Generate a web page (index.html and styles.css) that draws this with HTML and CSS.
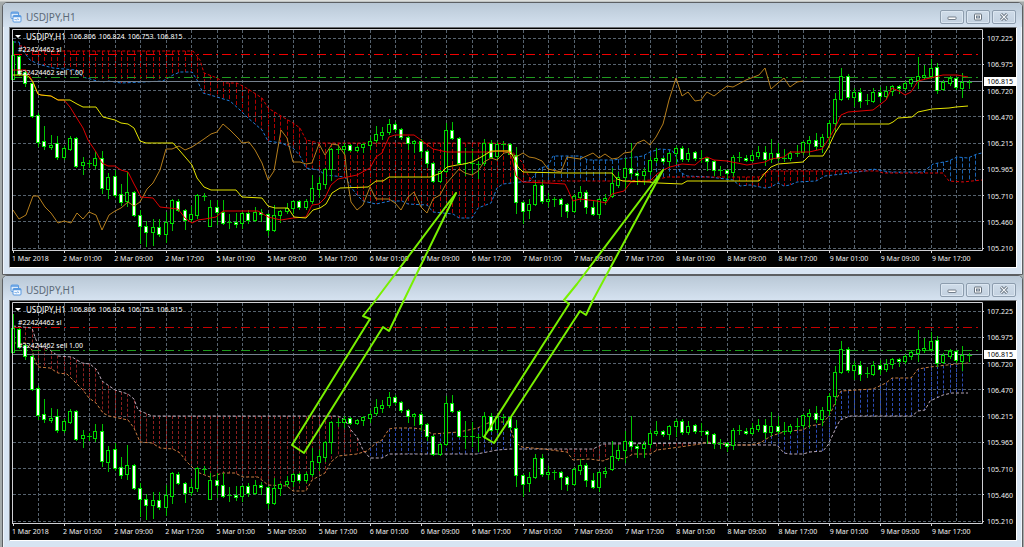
FILE: index.html
```html
<!DOCTYPE html>
<html lang="en">
<head>
<meta charset="utf-8">
<title>USDJPY,H1</title>
<link rel="stylesheet" href="styles.css">
</head>
<body>
<main class="desk">
  <section class="window" data-chart="ichimoku">
    <header class="titlebar">
      <svg class="app-icon" viewBox="0 0 12 12" aria-hidden="true"><rect x="1" y="1" width="7.500" height="6.500" rx="1" fill="#dcebfb" stroke="#5a9ae0"/><path d="M1 2h7.500" stroke="#5a9ae0" stroke-width="1.500"/><rect x="3" y="4.500" width="8" height="6.500" rx="1" fill="#f4f9ff" stroke="#5a9ae0"/><path d="M3 5.500h8" stroke="#5a9ae0" stroke-width="1.500"/><path d="M4.500 9l1-1 1 1.200 1-1.500 1.500 1" fill="none" stroke="#5a9ae0" stroke-width=".8"/></svg>
      <h2 class="title">USDJPY,H1</h2>
      <div class="controls">
        <button class="control" type="button" aria-label="Minimize"><svg viewBox="0 0 10 8"><rect x="1" y="4" width="8" height="2.500" rx=".5" fill="#fff" stroke="#66727f" stroke-width=".9"/></svg></button>
        <button class="control" type="button" aria-label="Maximize"><svg viewBox="0 0 10 8"><rect x="1.500" y="1" width="7" height="6" rx=".5" fill="#fff" stroke="#66727f"/><rect x="3.500" y="3" width="3" height="2" fill="#cbd8e6" stroke="#66727f" stroke-width=".9"/></svg></button>
        <button class="control" type="button" aria-label="Close"><svg viewBox="0 0 10 8"><path d="M2 1l6 6M8 1l-6 6" stroke="#66727f" stroke-width="3"/><path d="M2.200 1.200l5.600 5.600M7.800 1.200l-5.600 5.600" stroke="#f5f8fb" stroke-width="1.200"/></svg></button>
      </div>
    </header>
    <div class="chart">
      <div class="plot">
        <svg class="canvas" viewBox="12 29 971 222" preserveAspectRatio="none"></svg>
        <p class="quote"><span class="marker"></span><span class="symbol">USDJPY,H1</span><span>106.806</span><span>106.824</span><span>106.753</span><span>106.815</span></p>
        <p class="order stop">#22424462 sl</p>
        <p class="order sell">#22424462 sell 1.00</p>
      </div>
      <div class="prices"></div>
      <div class="dates"></div>
    </div>
  </section>
  <section class="window" data-chart="span">
    <header class="titlebar">
      <svg class="app-icon" viewBox="0 0 12 12" aria-hidden="true"><rect x="1" y="1" width="7.500" height="6.500" rx="1" fill="#dcebfb" stroke="#5a9ae0"/><path d="M1 2h7.500" stroke="#5a9ae0" stroke-width="1.500"/><rect x="3" y="4.500" width="8" height="6.500" rx="1" fill="#f4f9ff" stroke="#5a9ae0"/><path d="M3 5.500h8" stroke="#5a9ae0" stroke-width="1.500"/><path d="M4.500 9l1-1 1 1.200 1-1.500 1.500 1" fill="none" stroke="#5a9ae0" stroke-width=".8"/></svg>
      <h2 class="title">USDJPY,H1</h2>
      <div class="controls">
        <button class="control" type="button" aria-label="Minimize"><svg viewBox="0 0 10 8"><rect x="1" y="4" width="8" height="2.500" rx=".5" fill="#fff" stroke="#66727f" stroke-width=".9"/></svg></button>
        <button class="control" type="button" aria-label="Maximize"><svg viewBox="0 0 10 8"><rect x="1.500" y="1" width="7" height="6" rx=".5" fill="#fff" stroke="#66727f"/><rect x="3.500" y="3" width="3" height="2" fill="#cbd8e6" stroke="#66727f" stroke-width=".9"/></svg></button>
        <button class="control" type="button" aria-label="Close"><svg viewBox="0 0 10 8"><path d="M2 1l6 6M8 1l-6 6" stroke="#66727f" stroke-width="3"/><path d="M2.200 1.200l5.600 5.600M7.800 1.200l-5.600 5.600" stroke="#f5f8fb" stroke-width="1.200"/></svg></button>
      </div>
    </header>
    <div class="chart">
      <div class="plot">
        <svg class="canvas" viewBox="12 29 971 222" preserveAspectRatio="none"></svg>
        <p class="quote"><span class="marker"></span><span class="symbol">USDJPY,H1</span><span>106.806</span><span>106.824</span><span>106.753</span><span>106.815</span></p>
        <p class="order stop">#22424462 sl</p>
        <p class="order sell">#22424462 sell 1.00</p>
      </div>
      <div class="prices"></div>
      <div class="dates"></div>
    </div>
  </section>
  <svg class="arrows" viewBox="0 0 1024 547" preserveAspectRatio="none" aria-hidden="true">
    <path d="M456 193L375 301 363 316 370 319 292 445 304 453 383 327 389 331 404 300Z"/>
    <path d="M663 170L577 284 564 300 569 304 484 437 494 443 580 311 586 315 593 300Z"/>
  </svg>
</main>
<script src="chart.js"></script>
</body>
</html>
```
FILE: styles.css
```css
* {
  box-sizing: border-box;
}

body {
  margin: 0;
  height: 100vh;
  overflow: hidden;
  background: #aab0b0;
  font-family: "Noto Sans", "Open Sans", sans-serif;
}

.desk {
  position: relative;
  height: 100%;
  padding: 2px 1px 0 2px;
  overflow: hidden;
  background: linear-gradient(#dcdedc, #dcdedc 1px, #a4aaaa 2px);
}

.window {
  border: 1px solid #5c5f62;
  border-radius: 5px 5px 0 0;
  background: #d7e4f2;
  box-shadow: inset 1px 0 #eef4fa, inset -1px 0 #eef4fa;
}

.titlebar {
  display: flex;
  align-items: center;
  gap: 4px;
  height: 24px;
  padding: 4px 6px 0 7px;
  border-radius: 4px 4px 0 0;
  background: linear-gradient(#b9c8d6, #d5e2f0);
}

.app-icon {
  width: 12px;
  height: 12px;
}

.title {
  flex: 1;
  margin: 0;
  font-size: 10px;
  line-height: 12px;
  font-weight: 400;
  color: #5c6a78;
}

.controls {
  display: flex;
  gap: 2px;
}

.control {
  display: flex;
  align-items: center;
  justify-content: center;
  width: 24px;
  height: 14px;
  padding: 0;
  border: 1px solid #8d9dae;
  border-radius: 2px;
  background: linear-gradient(#cfdce9, #c3d1e0);
  box-shadow: inset 0 0 0 1px #dbe6f1;
}

.control svg {
  width: 10px;
  height: 8px;
}

.chart {
  display: grid;
  grid-template-columns: 1fr 33px;
  grid-template-rows: 222px 16px;
  margin: 0 5px 6px 6px;
  padding: 1px 0 0 2px;
  border: 1px solid #fff;
  border-top-color: #6b6e72;
  border-left-color: #7d8186;
  background: #000;
  color: #f0f0f0;
  font-size: 7px;
  line-height: 9px;
}

.plot {
  position: relative;
}

.canvas {
  display: block;
  width: 100%;
  height: 100%;
  overflow: visible;
  fill: none;
  stroke-width: 1;
}

.quote,
.order {
  position: absolute;
  margin: 0;
  white-space: nowrap;
  color: #fff;
}

.quote {
  display: flex;
  align-items: center;
  gap: 3px;
  top: 3px;
  left: 3px;
}

.marker {
  border: 3px solid transparent;
  border-top: 3px solid #fff;
  border-bottom: 0;
}

.symbol {
  padding: 0 1px 0 2px;
  font-size: 8px;
}

.order {
  left: 6px;
}

.stop {
  top: 16px;
}

.sell {
  top: 39px;
}

.prices {
  position: relative;
  grid-row: span 2;
  display: flex;
  flex-direction: column;
  justify-content: space-between;
  padding: 5px 0 14px 4px;
}

.current {
  position: absolute;
  top: 48px;
  left: 1px;
  right: 0;
  padding-left: 3px;
  background: #fff;
  color: #000;
}

.dates {
  display: grid;
  grid-template-columns: repeat(19, 1fr);
  padding-top: 3px;
  white-space: nowrap;
}

.grid { stroke: #56626e; stroke-dasharray: 3 2; }
.frame { stroke: #d0d0d4; }
.price-line { stroke: #75818e; }
.stop-line { stroke: #f00000; stroke-dasharray: 9 4 2 4; }
.sell-line { stroke: #1f9a1f; stroke-dasharray: 9 4 2 4; }
.bull { stroke: #00dc00; fill: #000; }
.bear { stroke: #00e800; fill: #fff; }
.wick { stroke: #00c400; }
.tenkan { stroke: #e00000; }
.kijun { stroke: #e4e400; }
.chikou { stroke: #b57e1c; }
.span-a { stroke: #1e7ad8; stroke-dasharray: 3 2; }
.span-b { stroke: #d80000; stroke-dasharray: 3 2; }
.upper { stroke: #b9a9b9; stroke-dasharray: 3 2; }
.lower { stroke: #c87c40; stroke-dasharray: 3 2; }
.hatch-down { stroke: #b00000; stroke-dasharray: 4 2; }
.hatch-up { stroke: #1b62b0; stroke-dasharray: 4 2; }
[data-chart="span"] .stop-line { stroke: #c40000; }
[data-chart="span"] .hatch-down { stroke: #8a1f1f; stroke-dasharray: 3 2; }
[data-chart="span"] .hatch-up { stroke: #2c4cb4; stroke-dasharray: 3 2; }

.arrows {
  position: absolute;
  inset: 0;
  width: 100%;
  height: 100%;
  fill: none;
  stroke: #78f000;
  stroke-width: 2;
  stroke-linejoin: round;
  pointer-events: none;
}
```
FILE: chart.js
```js
// Hourly candles: high, body top, body bottom, low, falling (1) or rising (0).
const candles = `41 55 79 79 0;55 56 74 75 1;71 72 83 86 1;82 83 116 117 1;113 115 142 146 1;126 141 146 149 1;135 145 147 149 0;136 143 157 159 1;146 148 157 159 0;136 138 149 150 0;137 138 166 167 1;157 162 165 174 0;160 163 164 167 1;151 158 165 168 0;151 158 188 193 1;173 177 189 198 0;170 176 195 197 1;184 194 202 205 1;172 192 201 206 0;191 192 215 216 1;210 215 226 243 1;221 226 232 246 1;219 227 232 245 0;219 227 234 236 1;212 222 234 242 0;199 200 223 230 0;199 201 210 211 1;209 210 220 229 1;206 214 219 222 0;194 195 215 218 0;193 196 196 200 0;200 207 226 226 0;200 207 212 224 1;200 212 223 224 1;214 222 223 228 0;213 222 224 227 1;212 213 223 228 0;210 213 220 223 1;207 212 220 221 0;209 212 214 221 1;213 214 230 235 1;205 215 230 231 0;210 211 215 222 0;203 208 211 213 0;200 201 208 213 0;200 201 207 209 1;199 201 207 209 0;175 188 201 203 0;177 183 189 197 0;168 169 184 188 0;148 149 169 180 0;145 149 149 153 0;143 146 149 154 0;144 145 150 151 1;146 147 150 151 0;143 144 147 152 0;137 141 145 149 0;126 134 140 142 0;127 132 135 139 0;119 124 132 134 0;122 124 129 131 1;128 129 137 139 1;136 137 143 149 1;140 141 143 152 0;139 141 151 157 1;150 151 163 167 1;162 163 181 182 1;170 171 181 182 0;123 130 171 172 0;122 130 138 139 1;137 138 163 164 1;148 163 163 175 0;149 163 164 173 0;161 164 164 178 0;139 143 163 165 0;140 143 157 158 1;142 144 156 159 0;141 144 145 149 0;143 144 154 156 1;147 155 202 213 1;201 202 211 223 1;199 204 210 218 0;181 185 204 205 0;181 185 201 203 1;193 199 201 206 0;197 199 199 206 0;198 199 204 216 1;203 204 211 217 1;194 196 211 212 0;186 192 197 201 0;190 192 207 213 1;200 207 214 215 1;198 199 214 218 0;194 198 200 204 0;168 183 196 197 0;172 177 185 187 0;158 168 177 189 0;143 168 173 176 1;171 173 175 184 1;168 171 175 184 0;157 160 171 174 0;148 158 160 162 0;157 158 161 163 1;152 153 161 166 0;146 148 153 163 0;146 148 159 161 1;148 153 159 161 0;151 152 158 160 1;150 158 158 162 0;157 158 161 170 1;160 161 170 175 1;166 170 170 175 0;169 170 173 178 1;155 157 172 176 0;152 157 157 161 0;155 158 160 161 1;150 155 160 161 0;146 152 156 158 0;146 152 159 165 1;139 153 159 162 0;143 153 158 160 1;149 158 159 161 0;151 153 158 160 0;145 153 153 156 0;141 142 152 154 0;136 140 143 154 0;133 140 146 149 1;134 137 146 152 0;120 123 137 142 0;93 99 123 131 0;68 76 99 100 0;74 76 97 99 1;88 92 97 106 0;88 92 101 107 1;94 100 100 104 0;88 92 101 102 0;87 92 96 101 1;86 91 96 98 0;85 86 91 95 0;85 86 88 93 1;81 83 88 90 0;77 79 83 86 0;57 76 80 88 0;65 75 77 79 0;59 68 76 78 0;63 67 90 93 1;80 82 89 90 0;76 78 83 85 0;77 78 87 89 1;73 82 88 97 0;80 82 82 88 0`
  .split(";").map(row => row.split(" ").map(Number));

const lines = {
  kijun: "13,75 26,75 29,77 33,82 38,94 41,95 51,96 58,100 70,100 77,104 83,107 96,107 103,117 115,120 121,123 128,124 134,128 140,141 146,143 173,143 180,151 186,158 192,165 197,178 204,187 211,190 236,190 242,197 262,198 268,206 275,208 288,208 294,217 306,218 313,210 320,208 326,204 332,193 340,188 368,187 376,181 383,181 389,177 430,177 441,173 447,167 457,165 464,164 472,162 483,156 491,151 510,151 515,160 518,167 523,172 563,173 612,173 617,179 623,181 650,182 658,183 682,184 687,181 759,181 765,173 771,167 778,164 803,162 809,156 823,156 828,148 835,133 841,124 889,124 893,122 898,118 912,117 918,112 932,109 949,108 956,107 968,106",
  tenkan: "13,70 26,70 32,80 38,94 41,95 51,96 58,100 64,100 70,107 78,120 83,128 88,140 96,152 102,163 108,166 115,166 121,170 128,172 134,184 141,197 153,198 160,207 178,209 185,218 192,223 198,220 205,219 216,217 223,211 258,211 268,217 281,220 293,218 306,217 312,205 319,204 325,198 331,185 338,179 357,175 370,168 376,157 382,153 389,137 395,135 414,135 421,140 433,149 447,152 491,152 497,151 508,151 512,158 516,176 523,182 548,183 565,184 568,190 573,201 580,199 597,201 606,203 612,194 624,191 631,182 650,181 657,174 663,170 670,167 682,164 695,165 702,159 707,157 714,160 727,161 747,165 765,162 771,159 784,157 790,152 809,152 822,149 828,140 835,128 841,115 848,112 873,110 886,100 892,88 899,91 905,95 911,92 918,81 930,78 943,75 957,75 968,77",
  chikou: "13,210 19,219 26,215 33,196 38,196 45,207 51,213 58,223 64,221 71,223 77,213 83,219 89,212 96,215 102,230 109,215 115,211 121,208 128,202 134,206 140,202 147,189 153,183 160,170 166,149 172,149 179,146 185,150 192,147 204,139 211,134 217,132 223,124 230,130 239,139 242,143 249,142 255,150 262,163 268,180 274,171 281,130 287,138 293,162 300,162 306,164 312,163 319,144 325,155 332,144 338,145 345,155 347,177 351,202 357,210 363,205 370,187 376,199 389,199 395,203 401,210 408,197 414,192 421,207 427,213 433,199 440,195 446,184 459,169 465,173 472,175 478,171 484,162 491,158 497,160 504,153 510,152 516,157 523,153 529,157 535,158 542,161 548,169 561,172 567,157 580,159 593,153 599,158 605,154 612,159 618,158 624,153 631,152 637,143 644,140 650,145 656,137 663,124 669,100 676,78 682,96 688,92 695,101 701,100 707,92 714,96 727,86 733,87 746,80 759,75 765,68 771,89 778,83 784,78 790,87 797,82 803,81",
  "span-b": "19,46 24,46 30,51 193,51 200,60 204,73 217,78 225,83 237,83 248,89 262,98 268,108 281,116 293,123 300,128 306,140 319,143 491,143 507,144 515,155 522,162 527,173 532,181 613,181 655,180 667,177 759,177 765,173 770,171 878,171 883,173 943,173 949,181 963,182 972,181 982,180",
  "span-a": "13,42 19,42 24,52 30,60 38,64 53,68 75,70 83,77 97,81 103,82 108,81 121,83 143,82 163,81 173,75 180,72 192,72 197,80 203,93 217,97 230,101 240,110 248,118 262,130 268,141 281,143 293,148 300,156 306,168 319,170 325,175 345,177 351,187 357,195 363,201 376,204 390,201 402,201 408,204 427,205 433,212 453,214 459,218 472,218 478,208 491,203 497,188 503,184 520,182 530,181 540,168 548,166 553,156 580,156 588,160 613,160 643,156 650,152 660,149 672,150 677,158 680,172 687,176 710,177 733,180 740,186 750,185 765,188 771,187 778,183 784,186 790,185 797,182 816,181 825,176 850,173 865,171 873,169 890,172 923,172 933,164 949,161 957,157 968,158 977,154 982,153",
  upper: "13,53 32,55 35,64 38,72 50,77 58,83 72,84 82,90 90,91 97,97 102,108 115,117 128,121 134,126 138,137 152,143 338,143 345,147 351,157 357,164 363,177 370,185 382,185 389,181 477,181 497,177 510,176 593,176 603,171 703,170 733,172 777,172 784,180 790,181 803,181 810,179 823,178 828,172 835,157 840,147 850,143 912,143 918,138 925,137 930,128 943,122 952,120 968,120",
  lower: "13,70 25,70 32,77 35,87 38,94 50,95 58,100 67,101 77,111 83,117 89,125 96,130 103,140 109,143 128,147 134,155 140,169 152,170 160,175 173,176 180,180 187,189 197,199 210,204 223,200 235,200 243,204 258,204 268,212 287,213 293,218 306,218 312,207 325,200 331,189 338,183 357,181 367,178 376,170 382,167 389,156 395,155 413,155 421,156 433,161 459,159 478,155 483,152 491,149 507,149 510,154 515,169 522,174 543,176 567,179 573,187 590,186 603,188 613,184 624,186 633,181 650,181 657,177 680,174 700,171 707,169 733,172 750,172 760,170 771,163 787,158 803,157 809,153 822,151 828,144 832,137 837,125 841,118 873,116 886,110 892,105 911,105 918,96 930,94 947,92 968,90"
};

const prices = ["107.225", "106.975", "106.720", "106.470", "106.215", "105.965", "105.710", "105.460", "105.210"];
const dates = ["1 Mar 2018"];
for (const day of [2, 5, 6, 7, 8, 9]) for (const hour of ["01", "09", "17"]) dates.push(`${day} Mar ${hour}:00`);

const STEP = 6.375;
const path = (cls, d) => `<path class="${cls}" d="${d}"/>`;

function valueAt(name, x) {
  const points = lines[name].split(" ").map(p => p.split(",").map(Number));
  for (let i = 1; i < points.length; i++) {
    const [x0, y0] = points[i - 1], [x1, y1] = points[i];
    if (x >= x0 && x <= x1) return y0 + (y1 - y0) * (x - x0) / (x1 - x0);
  }
  return null;
}

function cloud(first, second) {
  let down = "", up = "";
  for (let i = 0; i < 153; i++) {
    const x = Math.floor(13 + i * STEP) + 0.5;
    const a = valueAt(first, x), b = valueAt(second, x);
    if (a === null || b === null || Math.abs(a - b) < 1) continue;
    const segment = `M${x} ${Math.min(a, b).toFixed(1)}V${Math.max(a, b).toFixed(1)}`;
    if (a < b) down += segment; else up += segment;
  }
  return path("hatch-down", down) + path("hatch-up", up);
}

function gridLines() {
  let d = "";
  for (let i = 1; i < 38; i++) d += `M${Math.floor(13 + i * 25.5) + 0.5} 30V250`;
  for (let i = 0; i < 9; i++) d += `M13 ${Math.floor(38 + i * 26.25) + 0.5}H982`;
  return path("grid", d);
}

function frame() {
  let d = "M12.5 251V29.500H982.500V250.500H12";
  for (let i = 0; i < 19; i++) d += `M${13.5 + i * 51} 250v3`;
  for (let i = 0; i < 9; i++) d += `M982 ${Math.floor(38 + i * 26.25) + 0.5}h2`;
  return path("frame", d);
}

// Bodies are four units wide, with their outlines on whole pixels.
function candleShapes() {
  return candles.map(([high, top, bottom, low, falling], i) => {
    const x = Math.floor(13 + i * STEP);
    const height = bottom - top;
    const wick = path("wick", `M${x + 0.5} ${high}V${low + 1}`);
    if (height < 2) return wick + path("wick", `M${x - 2} ${top + 0.5}h5`);
    return wick + `<rect class="${falling ? "bear" : "bull"}" x="${x - 1.5}" y="${top + 0.5}" width="3" height="${height}"/>`;
  }).join("");
}

const curve = name => path(name, "M" + lines[name].replaceAll(" ", "L"));

for (const win of document.querySelectorAll(".window")) {
  const full = win.dataset.chart === "ichimoku";
  win.querySelector(".canvas").innerHTML =
    gridLines() +
    (full ? cloud("span-b", "span-a") + curve("span-a") + curve("span-b")
          : cloud("upper", "lower") + curve("upper") + curve("lower")) +
    path("price-line", "M13 81.5H982") + path("stop-line", "M13 54.5H982") + path("sell-line", "M13 77.5H982") +
    candleShapes() +
    (full ? curve("chikou") + curve("tenkan") + curve("kijun") : "") +
    frame();
  win.querySelector(".prices").innerHTML =
    prices.map(p => `<span>${p}</span>`).join("") + `<span class="current">106.815</span>`;
  win.querySelector(".dates").innerHTML = dates.map(d => `<span>${d}</span>`).join("");
}
```
